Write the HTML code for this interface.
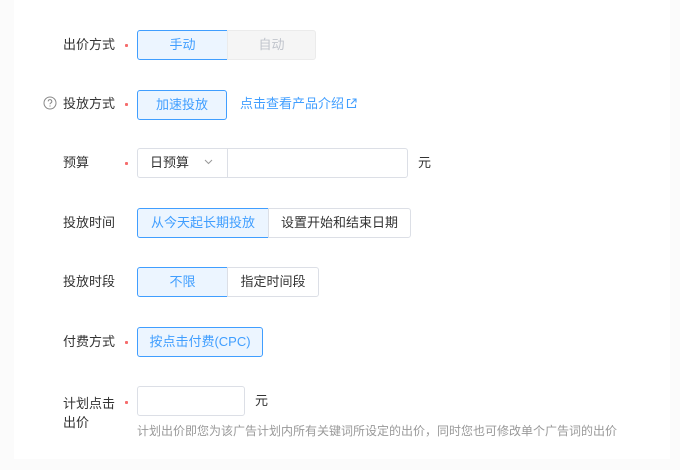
<!DOCTYPE html>
<html><head><meta charset="utf-8"><style>
*{box-sizing:border-box;margin:0;padding:0}
body{width:680px;height:470px;background:#fbfbfb;font-family:"Liberation Sans","Noto Sans CJK SC",sans-serif;font-size:13px;color:#333;position:relative;overflow:hidden}
.panel{position:absolute;left:14px;top:0;width:656px;height:459px;background:#fff}
.a{position:absolute}
.lbl{position:absolute;left:63px;line-height:16px}
.star{position:absolute;left:125px;width:3px;height:3px;background:#f56c6c;border-radius:1px}
.btn{position:absolute;height:30px;line-height:28px;text-align:center;border:1px solid #dcdfe6;background:#fff;color:#333}
.on{border-color:#409eff;background:#ecf5ff;color:#409eff;border-radius:3px}
.dis{background:#f5f5f5;border-color:#ebebeb;color:#c0c4cc}
</style></head><body>
<div class="panel"></div>

<div class="lbl" style="top:37px">出价方式</div><div class="star" style="top:44px"></div>
<div class="btn on" style="left:137px;top:30px;width:91px;border-radius:3px 0 0 3px">手动</div>
<div class="btn dis" style="left:227px;top:30px;width:89px;border-radius:0 3px 3px 0">自动</div>

<svg class="a" style="left:43px;top:96px" width="14" height="14" viewBox="0 0 14 14"><circle cx="7" cy="7" r="6" fill="none" stroke="#888" stroke-width="1"/><path d="M5.2 5.4a1.8 1.8 0 1 1 2.4 1.7c-.5.2-.6.5-.6 1.1" fill="none" stroke="#888" stroke-width="1"/><circle cx="7" cy="10" r=".6" fill="#888"/></svg>
<div class="lbl" style="top:96px">投放方式</div><div class="star" style="top:103px"></div>
<div class="btn on" style="left:137px;top:90px;width:90px">加速投放</div>
<div class="a" style="left:240px;top:96px;color:#409eff;line-height:16px">点击查看产品介绍</div>
<svg class="a" style="left:346px;top:98px" width="11" height="11" viewBox="0 0 11 11"><path d="M4.5 1.5H1.5v8h8V6.5M6.5 1H10v3.5M10 1L5 6" fill="none" stroke="#409eff" stroke-width="1.1"/></svg>

<div class="lbl" style="top:155px">预算</div><div class="star" style="top:162px"></div>
<div class="btn" style="left:137px;top:148px;width:91px;border-radius:3px 0 0 3px;text-align:left;padding-left:12px">日预算</div>
<svg class="a" style="left:204px;top:159px" width="9" height="6" viewBox="0 0 9 6"><path d="M1 1l3.5 3.5L8 1" fill="none" stroke="#999"/></svg>
<div class="btn" style="left:227px;top:148px;width:181px;border-radius:0 3px 3px 0"></div>
<div class="a" style="left:418px;top:155px;line-height:16px">元</div>

<div class="lbl" style="top:215px">投放时间</div>
<div class="btn on" style="left:137px;top:208px;width:132px;border-radius:3px 0 0 3px">从今天起长期投放</div>
<div class="btn" style="left:268px;top:208px;width:143px;border-radius:0 3px 3px 0">设置开始和结束日期</div>

<div class="lbl" style="top:274px">投放时段</div>
<div class="btn on" style="left:137px;top:267px;width:91px;border-radius:3px 0 0 3px">不限</div>
<div class="btn" style="left:227px;top:267px;width:92px;border-radius:0 3px 3px 0">指定时间段</div>

<div class="lbl" style="top:334px">付费方式</div><div class="star" style="top:341px"></div>
<div class="btn on" style="left:137px;top:327px;width:126px">按点击付费(CPC)</div>

<div class="lbl" style="top:394px;line-height:19px">计划点击<br>出价</div><div class="star" style="top:401px"></div>
<div class="btn" style="left:137px;top:386px;width:108px;border-radius:3px"></div>
<div class="a" style="left:255px;top:393px;line-height:16px">元</div>
<div class="a" style="left:137px;top:423px;font-size:12px;color:#999;line-height:16px">计划出价即您为该广告计划内所有关键词所设定的出价，同时您也可修改单个广告词的出价</div>
</body></html>
